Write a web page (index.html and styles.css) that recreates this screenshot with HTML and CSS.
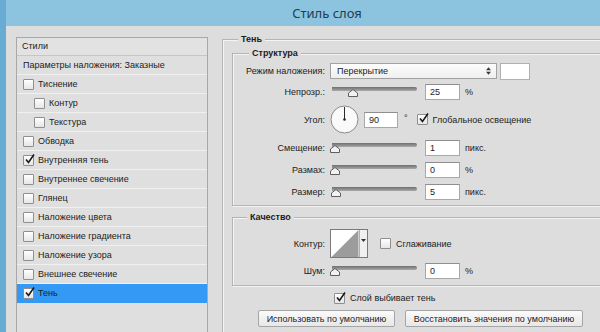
FILE: index.html
```html
<html lang="ru">
<head>
  <meta charset="UTF-8">
  <title>Стиль слоя</title>
  <link rel="stylesheet" href="styles.css">
</head>
<body>
  <div class="window">
    <div class="titlebar">Стиль слоя</div>
    <div class="main">
      <div class="styles-panel">
        <div class="panel-head">Стили</div>
        <div class="item">Параметры наложения: Заказные</div>
        <div class="item"><span class="cb"></span>Тиснение</div>
        <div class="item sub"><span class="cb"></span>Контур</div>
        <div class="item sub"><span class="cb"></span>Текстура</div>
        <div class="item"><span class="cb"></span>Обводка</div>
        <div class="item"><span class="cb checked"><svg viewBox="0 0 11 11"><path d="M2 5.5 L4.5 8.5 L10 0.5"/></svg></span>Внутренняя тень</div>
        <div class="item"><span class="cb"></span>Внутреннее свечение</div>
        <div class="item"><span class="cb"></span>Глянец</div>
        <div class="item"><span class="cb"></span>Наложение цвета</div>
        <div class="item"><span class="cb"></span>Наложение градиента</div>
        <div class="item"><span class="cb"></span>Наложение узора</div>
        <div class="item"><span class="cb"></span>Внешнее свечение</div>
        <div class="item selected"><span class="cb checked"><svg viewBox="0 0 11 11"><path d="M2 5.5 L4.5 8.5 L10 0.5"/></svg></span>Тень</div>
      </div>

      <div class="settings">
        <fieldset class="group outer">
          <legend>Тень</legend>

          <fieldset class="group structure">
            <legend>Структура</legend>
            <div class="row">
              <span class="lbl">Режим наложения:</span>
              <div class="select">Перекрытие
                <svg class="updown" viewBox="0 0 6 9"><path d="M3 0 L6 3.5 H0 Z M3 9 L6 5.5 H0 Z"/></svg>
              </div>
              <div class="swatch"></div>
            </div>
            <div class="row">
              <span class="lbl">Непрозр.:</span>
              <div class="slider"><div class="track"></div><svg class="thumb" style="left: 18px" viewBox="0 0 10 8"><path d="M0.5 7.5 V4 L5 0.5 L9.5 4 V7.5 Z"/></svg></div>
              <div class="num">25</div>
              <span class="unit">%</span>
            </div>
            <div class="row angle">
              <span class="lbl">Угол:</span>
              <svg class="dial" viewBox="0 0 29 29">
                <circle cx="14.5" cy="14.5" r="13.5"/>
                <line x1="14.5" y1="14.5" x2="14.5" y2="2"/>
                <circle class="dot" cx="14.5" cy="14.5" r="1.3"/>
              </svg>
              <div class="num">90</div>
              <span class="unit deg">°</span>
              <span class="cb checked"><svg viewBox="0 0 11 11"><path d="M2 5.5 L4.5 8.5 L10 0.5"/></svg></span>
              <span class="cb-text">Глобальное освещение</span>
            </div>
            <div class="row spaced">
              <span class="lbl">Смещение:</span>
              <div class="slider"><div class="track"></div><svg class="thumb" style="left: 0px" viewBox="0 0 10 8"><path d="M0.5 7.5 V4 L5 0.5 L9.5 4 V7.5 Z"/></svg></div>
              <div class="num">1</div>
              <span class="unit">пикс.</span>
            </div>
            <div class="row spaced">
              <span class="lbl">Размах:</span>
              <div class="slider"><div class="track"></div><svg class="thumb" style="left: 0px" viewBox="0 0 10 8"><path d="M0.5 7.5 V4 L5 0.5 L9.5 4 V7.5 Z"/></svg></div>
              <div class="num">0</div>
              <span class="unit">%</span>
            </div>
            <div class="row spaced">
              <span class="lbl">Размер:</span>
              <div class="slider"><div class="track"></div><svg class="thumb" style="left: 1px" viewBox="0 0 10 8"><path d="M0.5 7.5 V4 L5 0.5 L9.5 4 V7.5 Z"/></svg></div>
              <div class="num">5</div>
              <span class="unit">пикс.</span>
            </div>
          </fieldset>

          <fieldset class="group quality">
            <legend>Качество</legend>
            <div class="row contour-row">
              <span class="lbl">Контур:</span>
              <div class="contour">
                <svg class="contour-img" viewBox="0 0 28 28"><polygon points="0,28 28,0 28,28"/></svg>
                <div class="contour-arrow"><svg viewBox="0 0 5 3"><path d="M0 0 H5 L2.5 3 Z"/></svg></div>
              </div>
              <span class="cb"></span>
              <span class="cb-text">Сглаживание</span>
            </div>
            <div class="row">
              <span class="lbl">Шум:</span>
              <div class="slider"><div class="track"></div><svg class="thumb" style="left: 0px" viewBox="0 0 10 8"><path d="M0.5 7.5 V4 L5 0.5 L9.5 4 V7.5 Z"/></svg></div>
              <div class="num">0</div>
              <span class="unit">%</span>
            </div>
          </fieldset>

          <div class="knockout">
            <span class="cb checked"><svg viewBox="0 0 11 11"><path d="M2 5.5 L4.5 8.5 L10 0.5"/></svg></span>
            <span class="cb-text">Слой выбивает тень</span>
          </div>

          <div class="buttons">
            <button class="btn btn-default">Использовать по умолчанию</button>
            <button class="btn btn-reset">Восстановить значения по умолчанию</button>
          </div>
        </fieldset>
      </div>
    </div>
  </div>
</body>
</html>
```

FILE: styles.css
```css
* {
  box-sizing: border-box;
}

body {
  margin: 0;
  font-family: "Liberation Sans", Arial, sans-serif;
  font-size: 9px;
  color: #1c1c1c;
}

.window {
  width: 600px;
  height: 332px;
  overflow: hidden;
  display: flex;
  flex-direction: column;
  border-left: 6px solid #68acd3;
  background-color: #dddddd;
}

.titlebar {
  flex: none;
  height: 26px;
  line-height: 26px;
  padding-left: 48px;
  text-align: center;
  background-color: #8cc3df;
  color: #1f3d52;
  font-family: "Noto Sans", sans-serif;
  font-size: 13px;
}

.main {
  flex: 1;
  display: flex;
  min-height: 0;
}

/* список стилей слева */
.styles-panel {
  flex: none;
  width: 192px;
  margin: 11px 0 0 10px;
  border: 1px solid #a8a8a8;
  border-bottom: none;
  background-color: #dfdfdf;
}

.panel-head {
  height: 18px;
  line-height: 17px;
  padding-left: 5px;
  border-bottom: 1px solid #c6c6c6;
  background-color: #e2e2e2;
}

.item {
  height: 19px;
  display: flex;
  align-items: center;
  padding-left: 6px;
  border-bottom: 1px solid #f0f0f0;
  white-space: nowrap;
}

.item.sub {
  padding-left: 17px;
}

.item .cb {
  margin-right: 4px;
}

.item.selected {
  background-color: #3399f5;
  border-bottom-color: #3399f5;
}

.cb {
  flex: none;
  position: relative;
  width: 11px;
  height: 11px;
  border: 1px solid #8f8f8f;
  border-radius: 1px;
  background: linear-gradient(#ffffff, #e6e6e6);
}

.cb svg {
  position: absolute;
  left: 0;
  top: -2px;
  width: 11px;
  height: 11px;
  fill: none;
  stroke: #1a1a1a;
  stroke-width: 1.6;
}

.cb-text {
  margin-left: 5px;
  white-space: nowrap;
}

/* правая часть */
.settings {
  flex: 1;
  min-width: 0;
  padding: 8px 0 0 14px;
}

.group {
  margin: 0;
  min-width: 0;
  border: 1px solid #b4b4b4;
  box-shadow: 1px 1px 0 #f4f4f4, inset 1px 1px 0 #f4f4f4;
}

.group legend {
  padding: 0 3px;
  line-height: 11px;
  font-weight: bold;
  background-color: #dddddd;
}

.outer {
  width: 420px;
  height: 320px;
  padding: 3px 0 0 9px;
}

.outer > legend {
  margin-left: 6px;
}

.structure,
.quality {
  width: 400px;
  padding: 4px 0 5px 0;
}

.structure > legend {
  margin-left: 16px;
}

.quality {
  margin-top: 6px;
  padding: 6px 0 6px 0;
}

.quality > legend {
  margin-left: 14px;
}

.row {
  display: flex;
  align-items: center;
  height: 16px;
}

.row + .row {
  margin-top: 5px;
}

.row.spaced {
  margin-top: 6px;
}

.row.angle {
  height: 29px;
}

.row.contour-row {
  height: 29px;
}

.lbl {
  flex: none;
  width: 92px;
  margin-right: 5px;
  text-align: right;
  white-space: nowrap;
}

.select {
  position: relative;
  width: 167px;
  height: 16px;
  line-height: 14px;
  padding-left: 6px;
  border: 1px solid #a2a2a2;
  background: linear-gradient(#fdfdfd, #efefef);
}

.updown {
  position: absolute;
  right: 5px;
  top: 3px;
  width: 5px;
  height: 8px;
  fill: #3a3a3a;
}

.swatch {
  width: 30px;
  height: 17px;
  margin-left: 3px;
  border: 1px solid #b0b0b0;
  background-color: #ffffff;
}

.slider {
  position: relative;
  flex: none;
  width: 87px;
  height: 16px;
}

.track {
  margin: 3px 0 0 2px;
  height: 4px;
  border-radius: 0 2px 2px 0;
  background: linear-gradient(#6f6f6f, #a9a9a9);
}

.thumb {
  position: absolute;
  top: 5px;
  width: 10px;
  height: 8px;
  fill: #f2f2f2;
  stroke: #5e5e5e;
  stroke-width: 1;
}

.num {
  flex: none;
  width: 35px;
  height: 16px;
  margin-left: 8px;
  padding-left: 4px;
  line-height: 14px;
  border: 1px solid #a8a8a8;
  border-top-color: #8e8e8e;
  background-color: #ffffff;
}

.angle .num {
  width: 34px;
  margin-left: 5px;
}

.unit {
  margin-left: 5px;
  white-space: nowrap;
}

.unit.deg {
  margin-left: 6px;
  margin-right: 9px;
  align-self: flex-start;
  margin-top: 8px;
}

.dial {
  flex: none;
  width: 29px;
  height: 29px;
}

.dial circle {
  fill: #fafafa;
  stroke: #8a8a8a;
  stroke-width: 1;
}

.dial line {
  stroke: #2a2a2a;
  stroke-width: 1;
}

.dial .dot {
  fill: #2a2a2a;
  stroke: none;
}

.contour {
  flex: none;
  display: flex;
  height: 29px;
  border: 1px solid #7a7a7a;
  background-color: #ffffff;
}

.contour-img {
  width: 28px;
  height: 27px;
  fill: #9c9c9c;
}

.contour-arrow {
  width: 8px;
  border-left: 1px solid #b0b0b0;
  background-color: #f0f0f0;
  padding: 9px 0 0 1px;
}

.contour-arrow svg {
  display: block;
  width: 5px;
  height: 3px;
  fill: #333333;
}

.contour-row .cb {
  margin-left: 12px;
}

.knockout {
  display: flex;
  align-items: center;
  height: 12px;
  margin: 6px 0 0 102px;
}

.buttons {
  display: flex;
  gap: 10px;
  margin: 6px 0 0 26px;
}

.btn {
  height: 17px;
  padding: 0;
  font-family: "Liberation Sans", Arial, sans-serif;
  font-size: 9px;
  color: #1c1c1c;
  border: 1px solid #a5a5a5;
  border-radius: 2px;
  background: linear-gradient(#fbfbfb, #e7e7e7);
}

.btn-default {
  width: 137px;
}

.btn-reset {
  width: 178px;
}
```
